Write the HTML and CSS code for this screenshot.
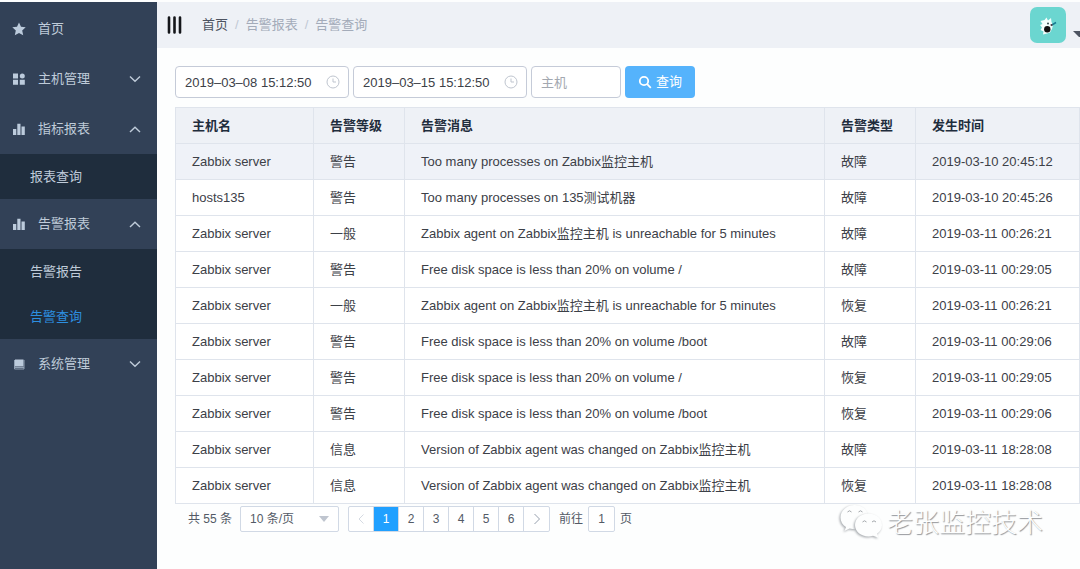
FILE: index.html
```html
<!DOCTYPE html>
<html lang="zh-CN">
<head>
<meta charset="utf-8">
<meta name="viewport" content="width=device-width, initial-scale=1">
<title>告警查询</title>
<link rel="stylesheet" href="styles.css">
</head>
<body>
<div class="app">
  <nav class="sidebar">
    <a class="item" href="#">
      <svg class="icon" viewBox="0 0 14 14"><path d="M7 .4l2 4.300 4.700.5-3.500 3.200 1 4.900L7 10.900l-4.200 2.400 1-4.900L.3 5.200l4.700-.5z"/></svg>
      <span class="label">首页</span>
    </a>
    <button class="item" type="button">
      <svg class="icon" viewBox="0 0 14 14"><path d="M1 1.500h5v5H1zM1 7.800h5v5H1zM7.800 7.800h5v5h-5z"/><circle cx="10.300" cy="4" r="2.500"/></svg>
      <span class="label">主机管理</span>
      <svg class="chevron" viewBox="0 0 14 9"><path d="M2 1.500l5 4.800 5-4.800"/></svg>
    </button>
    <button class="item" type="button" aria-expanded="true">
      <svg class="icon" viewBox="0 0 14 14"><path d="M1 7h3.300v6H1zM5.300 1.800h3.200V13H5.300zM9.500 4.500h3.300V13H9.500z"/></svg>
      <span class="label">指标报表</span>
      <svg class="chevron" viewBox="0 0 14 9"><path d="M2 7l5-4.800L12 7"/></svg>
    </button>
    <div class="submenu">
      <a class="subitem" href="#">报表查询</a>
    </div>
    <button class="item" type="button" aria-expanded="true">
      <svg class="icon" viewBox="0 0 14 14"><path d="M1 7h3.300v6H1zM5.300 1.800h3.200V13H5.300zM9.500 4.500h3.300V13H9.500z"/></svg>
      <span class="label">告警报表</span>
      <svg class="chevron" viewBox="0 0 14 9"><path d="M2 7l5-4.800L12 7"/></svg>
    </button>
    <div class="submenu">
      <a class="subitem" href="#">告警报告</a>
      <a class="subitem active" href="#">告警查询</a>
    </div>
    <button class="item" type="button">
      <svg class="icon" viewBox="0 0 14 14"><path d="M3 2.500h8.500v7H3z"/><path class="thin" d="M2.500 3v9h9.500V3M3 10.500h9"/></svg>
      <span class="label">系统管理</span>
      <svg class="chevron" viewBox="0 0 14 9"><path d="M2 1.500l5 4.800 5-4.800"/></svg>
    </button>
  </nav>

  <div class="page">
    <header class="topbar">
      <button class="toggle" type="button" aria-label="菜单">
        <svg viewBox="0 0 16 18"><path d="M2 1.500v15M7.500 1.500v15M13 1.500v15"/></svg>
      </button>
      <div class="crumbs">
        <a href="#">首页</a><span class="sep">/</span><span>告警报表</span><span class="sep">/</span><span>告警查询</span>
      </div>
      <button class="user" type="button" aria-label="用户">
        <svg class="avatar" viewBox="0 0 36 36">
          <rect width="36" height="36" rx="7" fill="#6bd6d0"/>
          <path fill="#f4fffd" d="M10.500 14l4-1 2-2.500 1.500 3 3-2.500.5 4 1.500 3-1 4-2 3.500-3 1-4 1 .5-3-3-1.500 1.500-2.500-2-2.500 2.500-1z"/>
          <circle cx="17.300" cy="22.300" r="3.200" fill="#111"/>
          <circle cx="18" cy="16.500" r="1" fill="#34484e"/>
          <path stroke="#177b91" stroke-width="1.500" d="M21 18.500l5-3"/>
          <circle cx="21.500" cy="18" r="1" fill="#5d3f45"/>
        </svg>
        <svg class="caret" viewBox="0 0 7 6"><path d="M0 0h7v6H6z"/></svg>
      </button>
    </header>

    <main class="content">
      <form class="filters">
        <span class="datebox">
          <input type="text" value="2019–03–08 15:12:50" aria-label="开始时间">
          <svg class="clock" viewBox="0 0 14 14"><circle cx="7" cy="7" r="6"/><path d="M7 3.500V7h3"/></svg>
        </span>
        <span class="datebox">
          <input type="text" value="2019–03–15 15:12:50" aria-label="结束时间">
          <svg class="clock" viewBox="0 0 14 14"><circle cx="7" cy="7" r="6"/><path d="M7 3.500V7h3"/></svg>
        </span>
        <input class="host" type="text" placeholder="主机" aria-label="主机">
        <button class="search" type="button">
          <svg viewBox="0 0 14 14"><circle cx="6" cy="6" r="4.200"/><path d="M9.200 9.200l3.600 3.600"/></svg>
          查询
        </button>
      </form>

      <table class="alerts">
        <colgroup><col class="c-host"><col class="c-level"><col><col class="c-type"><col class="c-time"></colgroup>
        <thead><tr><th>主机名</th><th>告警等级</th><th>告警消息</th><th>告警类型</th><th>发生时间</th></tr></thead>
        <tbody>
          <tr class="hover"><td>Zabbix server</td><td>警告</td><td>Too many processes on Zabbix监控主机</td><td>故障</td><td>2019-03-10 20:45:12</td></tr>
          <tr><td>hosts135</td><td>警告</td><td>Too many processes on 135测试机器</td><td>故障</td><td>2019-03-10 20:45:26</td></tr>
          <tr><td>Zabbix server</td><td>一般</td><td>Zabbix agent on Zabbix监控主机 is unreachable for 5 minutes</td><td>故障</td><td>2019-03-11 00:26:21</td></tr>
          <tr><td>Zabbix server</td><td>警告</td><td>Free disk space is less than 20% on volume /</td><td>故障</td><td>2019-03-11 00:29:05</td></tr>
          <tr><td>Zabbix server</td><td>一般</td><td>Zabbix agent on Zabbix监控主机 is unreachable for 5 minutes</td><td>恢复</td><td>2019-03-11 00:26:21</td></tr>
          <tr><td>Zabbix server</td><td>警告</td><td>Free disk space is less than 20% on volume /boot</td><td>故障</td><td>2019-03-11 00:29:06</td></tr>
          <tr><td>Zabbix server</td><td>警告</td><td>Free disk space is less than 20% on volume /</td><td>恢复</td><td>2019-03-11 00:29:05</td></tr>
          <tr><td>Zabbix server</td><td>警告</td><td>Free disk space is less than 20% on volume /boot</td><td>恢复</td><td>2019-03-11 00:29:06</td></tr>
          <tr><td>Zabbix server</td><td>信息</td><td>Version of Zabbix agent was changed on Zabbix监控主机</td><td>故障</td><td>2019-03-11 18:28:08</td></tr>
          <tr><td>Zabbix server</td><td>信息</td><td>Version of Zabbix agent was changed on Zabbix监控主机</td><td>恢复</td><td>2019-03-11 18:28:08</td></tr>
        </tbody>
      </table>

      <div class="pagination">
        <span>共 55 条</span>
        <span class="sizebox">
          <select aria-label="每页条数"><option>10 条/页</option></select>
          <svg class="arrow" viewBox="0 0 10 6"><path d="M0 0h10L5 6z"/></svg>
        </span>
        <div class="pager">
          <button type="button" aria-label="上一页" disabled><svg viewBox="0 0 8 12"><path d="M6.500 1.500L2 6l4.500 4.500"/></svg></button>
          <button type="button" class="current">1</button>
          <button type="button">2</button>
          <button type="button">3</button>
          <button type="button">4</button>
          <button type="button">5</button>
          <button type="button">6</button>
          <button type="button" aria-label="下一页"><svg viewBox="0 0 8 12"><path d="M1.500 1L6.500 6l-5 5"/></svg></button>
        </div>
        <label class="jump">前往 <input type="text" value="1"> 页</label>
      </div>
    </main>
  </div>

  <div class="watermark">
    <svg viewBox="0 0 44 36">
      <path class="bubble" d="M15.500 2C8 2 1.500 7.500 1.500 14.500c0 4 2 7.300 5.500 9.500l-1.500 4 5-2.500c2 .6 4 .8 6 .8L29 12C28 6 22.500 2 15.500 2z"/>
      <path class="bubble" d="M29.500 10.500c-7.500 0-13.500 5-13.500 11.500s6 11.500 13.500 11.500c1.500 0 3-.2 4.500-.7l5.500 2-1.500-4c3-2.200 5-5 5-8.800 0-6.500-6-11.500-13.500-11.500z"/>
      <path class="eyes" d="M8.500 9q2-2.500 4 0M19.500 9q2-2.500 4 0M23.500 19q2-2.500 4 0M33 19q2-2.500 4 0"/>
    </svg>
    <span>老张监控技术</span>
  </div>
</div>
</body>
</html>
```
FILE: styles.css
```css
* { box-sizing: border-box; }
body {
  margin: 0;
  background: #fdfefe;
  color: #3c4047;
  font: 13px/18px "Liberation Sans", "Noto Sans CJK SC", sans-serif;
}
button, input, select { font: inherit; color: inherit; margin: 0; }
button { border: 0; padding: 0; background: none; cursor: pointer; }
a { color: inherit; text-decoration: none; }
svg { display: block; flex: none; }

.app { position: relative; display: flex; min-height: 100vh; padding-top: 2px; overflow: hidden; }

/* Sidebar */
.sidebar {
  display: flex;
  flex-direction: column;
  flex: none;
  width: 157px;
  padding-top: 2px;
  background: #324157;
  color: #bfcbd9;
}
.item { display: flex; align-items: center; height: 50px; padding: 0 15px 0 12px; text-align: left; }
.icon { width: 14px; height: 14px; margin-right: 12px; fill: #bccbdc; }
.icon .thin { fill: none; stroke: #93a3b6; stroke-width: 1; }
.label { flex: 1; }
.chevron { width: 14px; height: 9px; fill: none; stroke: #bfcbd9; stroke-width: 1.4; }
.submenu { display: flex; flex-direction: column; background: #1f2d3d; }
.subitem { padding: 14px 30px 13px; }
.active { color: #2d8fe0; }

/* Top bar */
.page { flex: 1; min-width: 0; }
.topbar { display: flex; align-items: center; height: 46px; padding-left: 10px; background: #eef1f6; }
.toggle svg { width: 16px; height: 18px; stroke: #14161a; stroke-width: 2.6; stroke-linecap: round; }
.crumbs { flex: 1; padding-left: 19px; color: #a3abb9; }
.crumbs a { color: #4d5461; }
.sep { margin: 0 7px; color: #c0c8d4; }
.user { display: flex; align-items: center; gap: 7px; }
.avatar { width: 36px; height: 36px; }
.caret { width: 7px; height: 6px; margin-top: 18px; fill: #4d5461; }

/* Filters */
.content { padding: 18px 0 0 18px; }
.filters { display: flex; gap: 4px; margin-bottom: 9px; }
.filters input {
  height: 32px;
  padding: 0 9px;
  border: 1px solid #c5cbd8;
  border-radius: 4px;
  background: #fff;
}
.datebox { position: relative; }
.datebox input { width: 174px; }
.clock { position: absolute; top: 9px; right: 9px; width: 14px; height: 14px; fill: none; stroke: #bfc5cf; }
.filters .host { width: 90px; }
.host::placeholder { color: #a3a8b0; opacity: 1; }
.search {
  display: flex;
  align-items: center;
  gap: 4px;
  height: 32px;
  padding: 0 13px;
  border-radius: 4px;
  background: #55b3fc;
  color: #fff;
}
.search svg { width: 14px; height: 14px; fill: none; stroke: #fff; stroke-width: 1.8; }

/* Table */
.alerts { width: 100%; table-layout: fixed; border-collapse: collapse; background: #fff; }
.alerts th, .alerts td {
  height: 36px;
  padding: 0 0 0 16px;
  border: 1px solid #dfe4ec;
  text-align: left;
  white-space: nowrap;
}
.alerts th { background: #eef1f6; color: #1f2d3d; font-weight: 700; }
.hover td { background: #eff2f8; }
.c-host { width: 138px; }
.c-level, .c-type { width: 91px; }
.c-time { width: 164px; }

/* Pagination */
.pagination { display: flex; align-items: center; padding: 2px 0 0 13px; font-size: 12px; color: #535a66; }
.sizebox { position: relative; margin: 0 9px 0 8px; }
.sizebox select {
  appearance: none;
  width: 99px;
  height: 26px;
  padding: 0 9px;
  border: 1px solid #d1d9e5;
  border-radius: 2px;
  background: #fff;
}
.arrow { position: absolute; top: 10px; right: 10px; width: 10px; height: 6px; fill: #bfc5cf; }
.pager { display: flex; border: 1px solid #d1d9e5; border-radius: 2px; background: #fff; }
.pager button {
  display: flex;
  align-items: center;
  justify-content: center;
  width: 25px;
  height: 24px;
  border-right: 1px solid #d1d9e5;
}
.pager button:last-child { border-right: 0; }
.pager .current { background: #20a0ff; color: #fff; }
.pager svg { width: 8px; height: 12px; fill: none; stroke: #97a0ae; }
.pager button:disabled svg { stroke: #d5dae2; }
.jump { display: flex; align-items: center; gap: 5px; margin-left: 9px; }
.jump input {
  width: 27px;
  height: 26px;
  padding: 0;
  border: 1px solid #d1d9e5;
  border-radius: 2px;
  background: #fff;
  text-align: center;
}

/* Watermark floating over the page corner */
.watermark {
  position: absolute;
  right: 37px;
  bottom: 30px;
  display: flex;
  align-items: center;
  gap: 4px;
  color: #fdfefe;
  font: 300 26px/36px "Noto Sans CJK SC", sans-serif;
  text-shadow: 1px 1px 1px #8f9296;
  pointer-events: none;
}
.watermark svg { width: 44px; height: 36px; overflow: visible; }
.bubble { fill: #fdfefe; filter: drop-shadow(-1px 1px 1px #a4a8ac); }
.eyes { fill: none; stroke: #a4a8ac; stroke-width: 1; }
```
